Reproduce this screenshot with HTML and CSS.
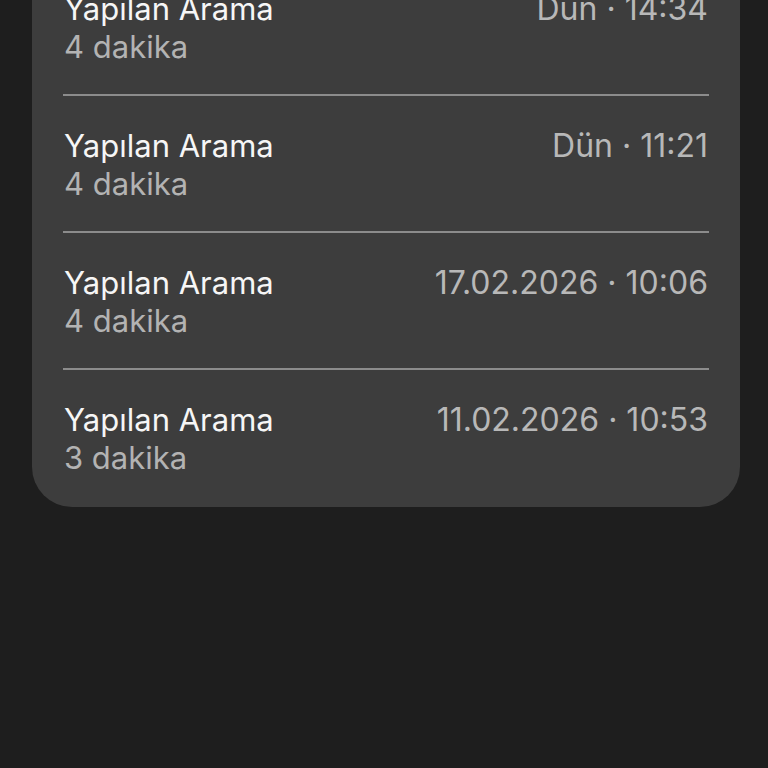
FILE: index.html
```html
<!DOCTYPE html>
<html lang="tr">
<head>
<meta charset="utf-8">
<title>Arama Geçmişi</title>
<link rel="stylesheet" href="styles.css">
</head>
<body>
<main class="page">
  <section class="card">
    <div class="row">
      <div class="info">
        <div class="title">Yapılan Arama</div>
        <div class="sub">4 dakika</div>
      </div>
      <div class="time">Dün · 14:34</div>
    </div>
    <div class="row">
      <div class="info">
        <div class="title">Yapılan Arama</div>
        <div class="sub">4 dakika</div>
      </div>
      <div class="time">Dün · 11:21</div>
    </div>
    <div class="row">
      <div class="info">
        <div class="title">Yapılan Arama</div>
        <div class="sub">4 dakika</div>
      </div>
      <div class="time">17.02.2026 · 10:06</div>
    </div>
    <div class="row">
      <div class="info">
        <div class="title">Yapılan Arama</div>
        <div class="sub">3 dakika</div>
      </div>
      <div class="time">11.02.2026 · 10:53</div>
    </div>
  </section>
</main>
</body>
</html>
```

FILE: styles.css
```css
html, body {
  margin: 0;
  padding: 0;
  background: #1e1e1e;
  height: 100%;
  overflow: hidden;
}
body {
  font-family: Inter, "Noto Sans", "Liberation Sans", sans-serif;
  -webkit-font-smoothing: antialiased;
}
.page {
  padding: 0 28px 0 32px;
}
.card {
  margin-top: -60px;
  background: #3d3d3d;
  border-radius: 0 0 40px 40px;
  padding: 0 31px 0 31px;
}
.row {
  display: flex;
  justify-content: space-between;
  align-items: flex-start;
  padding: 31px 1px 28px 1px;
  border-top: 2px solid #8c8c8c;
}
.row:first-child {
  border-top: none;
  padding-top: 50px;
}
.row:last-child {
  padding-bottom: 30px;
}
.title {
  font-size: 31px;
  line-height: 38px;
  color: #f6f6f6;
}
.sub {
  font-size: 31px;
  line-height: 38px;
  color: #b3b3b3;
}
.time {
  font-size: 32px;
  line-height: 38px;
  color: #b8b8b8;
}
```
